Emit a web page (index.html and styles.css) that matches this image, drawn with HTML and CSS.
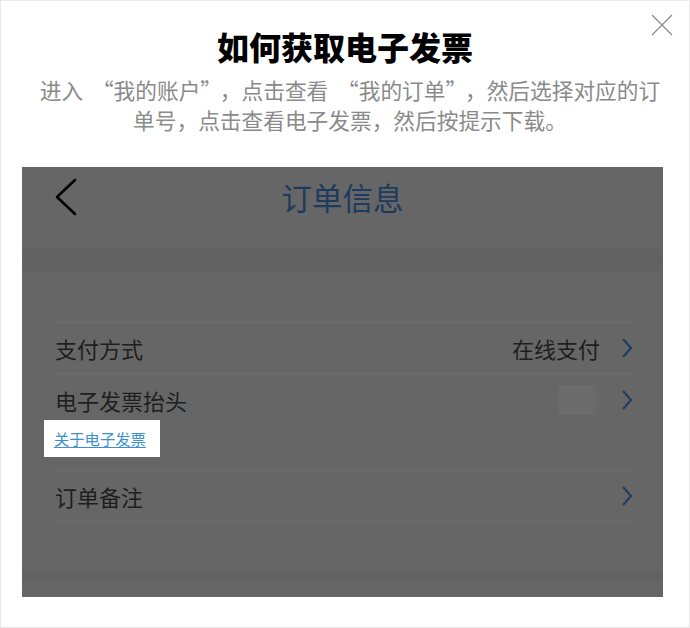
FILE: index.html
```html
<!DOCTYPE html>
<html lang="zh-CN">
<head>
<meta charset="utf-8">
<title>如何获取电子发票</title>
<link rel="stylesheet" href="styles.css">
</head>
<body>
<div class="dialog">
  <button class="close" aria-label="关闭">
    <svg width="22" height="22" viewBox="0 0 22 22"><path d="M1 1 L21 21 M21 1 L1 21" stroke="#8a8a8a" stroke-width="1.2" fill="none"/></svg>
  </button>
  <h1 class="title">如何获取电子发票</h1>
  <p class="desc">进入<span class="qo">“</span>我的账户<span class="qc">”</span>，点击查看<span class="qo">“</span>我的订单<span class="qc">”</span>，然后选择对应的订<br>单号，点击查看电子发票，然后按提示下载。</p>
  <div class="shot">
    <div class="shot-header">
      <svg class="back" width="24" height="38" viewBox="0 0 24 38"><path d="M21 2 L3 19 L21 36" stroke="#000" stroke-width="2.6" fill="none" stroke-linecap="round" stroke-linejoin="round"/></svg>
      <span class="shot-title">订单信息</span>
      <span></span>
    </div>
    <div class="band"></div>
    <div class="list">
      <div class="row">
        <span class="label">支付方式</span>
        <span class="value">在线支付</span>
        <svg class="chev" width="12" height="20" viewBox="0 0 12 20"><path d="M2 1 L10 10 L2 19" stroke="#1e3d5e" stroke-width="2" fill="none"/></svg>
      </div>
      <div class="row row-invoice">
        <div class="row-main">
          <span class="label">电子发票抬头</span>
          <span class="blur"></span>
          <svg class="chev" width="12" height="20" viewBox="0 0 12 20"><path d="M2 1 L10 10 L2 19" stroke="#1e3d5e" stroke-width="2" fill="none"/></svg>
        </div>
        <a class="about" href="#">关于电子发票</a>
      </div>
      <div class="row row-last">
        <span class="label">订单备注</span>
        <span class="value"></span>
        <svg class="chev" width="12" height="20" viewBox="0 0 12 20"><path d="M2 1 L10 10 L2 19" stroke="#1e3d5e" stroke-width="2" fill="none"/></svg>
      </div>
    </div>
    <div class="band2"></div>
  </div>
</div>
</body>
</html>
```
FILE: styles.css
```css
* { box-sizing: border-box; }
html, body { margin: 0; padding: 0; background: #fff; }
body { font-family: "Noto Sans CJK SC", "Noto Sans", sans-serif; }

.dialog {
  position: relative;
  width: 690px;
  height: 628px;
  border: 1px solid #e8e8e8;
  background: #fff;
  padding-top: 25px;
  overflow: hidden;
}

.close {
  position: absolute;
  top: 13px;
  right: 16px;
  width: 22px;
  height: 22px;
  padding: 0;
  border: 0;
  background: none;
  cursor: pointer;
}
.close svg { display: block; }

.title {
  margin: 0;
  text-align: center;
  font-size: 32px;
  line-height: 40px;
  font-weight: 900;
  color: #000;
}

.desc {
  margin: 9px 0 0;
  padding-left: 10px;
  text-align: center;
  font-size: 21.7px;
  line-height: 30px;
  color: #8a8a8a;
}
.qo { margin-left: 0.4em; }
.qc { margin-right: 0.4em; }

.shot {
  margin: 32px 0 0 21px;
  width: 641px;
  height: 430px;
  background: #666;
  overflow: hidden;
}

.shot-header {
  height: 60px;
  display: grid;
  grid-template-columns: 1fr auto 1fr;
  align-items: center;
  padding: 0 32px;
}
.back { display: block; }
.shot-title {
  font-size: 30.5px;
  color: #1c3b5e;
  line-height: 40px;
}

.band {
  margin-top: 22px;
  height: 22px;
  background: #626262;
}

.list {
  padding: 51px 30px 0 33px;
}

.row {
  display: flex;
  align-items: center;
  height: 51px;
  border-top: 1px dotted #777;
  font-size: 22px;
  color: #1e1e1e;
}
.row-last { border-bottom: 1px dotted #777; height: 52px; }

.label { flex: 1; line-height: 50px; }
.value { margin-right: 21px; }
.chev { display: block; }

.row-invoice {
  display: block;
  height: 97px;
  padding-top: 6px;
}
.row-main {
  display: flex;
  align-items: center;
  height: 40px;
}
.row-main .label { line-height: 40px; }
.blur {
  width: 40px;
  height: 30px;
  background: linear-gradient(90deg, #6c6c6c 70%, #686868);
  margin-right: 22px;
}

.about {
  display: block;
  width: fit-content;
  margin-left: -11px;
  padding: 0 14px 0 10px;
  height: 37px;
  line-height: 37px;
  background: #fff;
  font-size: 15.3px;
  color: #3d8fd0;
  text-decoration: underline;
  text-underline-offset: 2px;
}

.band2 {
  margin-top: 50px;
  height: 9px;
  background: #626262;
}
```
